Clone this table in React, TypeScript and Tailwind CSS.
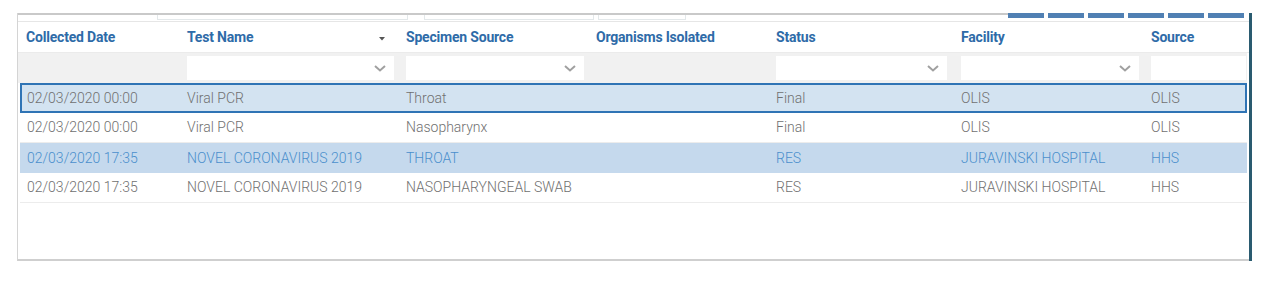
import React from "react";

const cols = "grid grid-cols-[161px_219px_190px_180px_185px_190px_104px]";
const rowCols = "grid grid-cols-[159px_219px_190px_180px_185px_190px_104px]";

const Chevron = () => (
  <svg width="12" height="7" viewBox="0 0 12 7" className="shrink-0">
    <polyline points="1,1 6,5.5 11,1" fill="none" stroke="#a0a0a0" strokeWidth="2" />
  </svg>
);

const FilterBox = () => (
  <div className="h-[24px] bg-white flex items-center justify-end pr-2">
    <Chevron />
  </div>
);

type Row = { d: string; t: string; s: string; st: string; f: string; src: string };

const rows: Row[] = [
  { d: "02/03/2020 00:00", t: "Viral PCR", s: "Throat", st: "Final", f: "OLIS", src: "OLIS" },
  { d: "02/03/2020 00:00", t: "Viral PCR", s: "Nasopharynx", st: "Final", f: "OLIS", src: "OLIS" },
  { d: "02/03/2020 17:35", t: "NOVEL CORONAVIRUS 2019", s: "THROAT", st: "RES", f: "JURAVINSKI HOSPITAL", src: "HHS" },
  { d: "02/03/2020 17:35", t: "NOVEL CORONAVIRUS 2019", s: "NASOPHARYNGEAL SWAB", st: "RES", f: "JURAVINSKI HOSPITAL", src: "HHS" },
];

export default function App() {
  return (
    <div className="w-[1267px] h-[282px] bg-white pt-[13px] pl-[17px]" style={{ fontFamily: "Roboto, 'Noto Sans', sans-serif" }}>
      <div className="w-[1235px] h-[248px] flex">
        <div className="flex-1 flex flex-col border-l border-[#d4d4d4] border-b-2 border-b-[#cfcfcf]">
          {/* top strip */}
          <div className="h-[9px] flex border-b border-[#e6e6e6]">
            <div className="flex-1 border-t-2 border-[#c9c9c9] flex pl-[139px]">
              <div className="w-[251px] h-[5px] border border-t-0 border-[#e3e8ea]" />
              <div className="w-[16px]" />
              <div className="w-[170px] h-[5px] border border-t-0 border-[#e3e8ea]" />
              <div className="w-[4px]" />
              <div className="w-[88px] h-[5px] border border-t-0 border-[#e3e8ea]" />
            </div>
            <div className="flex gap-[4px] pr-[6px]">
              {[0, 1, 2, 3, 4, 5].map((i) => (
                <div key={i} className="w-[36px] h-[5px] bg-[#5080b3]" />
              ))}
            </div>
          </div>
          {/* header */}
          <div className={`${cols} h-[31px] items-center border-b border-[#ebebeb] text-[14px] font-bold text-[#2e6ba8] tracking-[-0.2px]`}>
            <div className="pl-[8px]">Collected Date</div>
            <div className="pl-[8px] pr-[13px] flex items-center justify-between">
              <span>Test Name</span>
              <svg width="6" height="4" viewBox="0 0 6 4" className="mt-[4px]">
                <polygon points="0,0 6,0 3,3.5" fill="#555" />
              </svg>
            </div>
            <div className="pl-[8px]">Specimen Source</div>
            <div className="pl-[8px]">Organisms Isolated</div>
            <div className="pl-[8px]">Status</div>
            <div className="pl-[8px]">Facility</div>
            <div className="pl-[8px]">Source</div>
          </div>
          {/* filter row */}
          <div className={`${cols} h-[30px] items-center bg-[#f1f1f1] mr-[3px]`}>
            <div />
            <div className="pl-[8px] pr-[4px]"><FilterBox /></div>
            <div className="pl-[8px] pr-[4px]"><FilterBox /></div>
            <div />
            <div className="pl-[8px] pr-[6px]"><FilterBox /></div>
            <div className="pl-[8px] pr-[4px]"><FilterBox /></div>
            <div className="pl-[8px] pr-[1px]"><div className="h-[24px] bg-white" /></div>
          </div>
          {/* rows */}
          <div className="ml-[2px] mr-[3px] flex flex-col">
            {rows.map((r, i) => {
              const sel = i === 0;
              const alt = i === 2;
              const bg = sel
                ? "bg-[#d3e3f1] shadow-[inset_0_0_0_2px_#2f74b5]"
                : alt
                ? "bg-[#c5d9ed]"
                : "bg-white border-b border-[#ececec]";
              const color = alt ? "text-[#4a8fcc]" : "text-[#707070]";
              return (
                <div key={i} className={`${rowCols} h-[30px] items-center text-[14px] font-light ${bg} ${color}`}>
                  <div className="pl-[7px]">{r.d}</div>
                  <div className="pl-[8px]">{r.t}</div>
                  <div className="pl-[8px]">{r.s}</div>
                  <div className="pl-[8px]"></div>
                  <div className="pl-[8px]">{r.st}</div>
                  <div className="pl-[8px]">{r.f}</div>
                  <div className="pl-[8px]">{r.src}</div>
                </div>
              );
            })}
          </div>
          <div className="flex-1" />
        </div>
        <div className="w-[3px] ml-[-1px] bg-[#2a5b70]" />
      </div>
    </div>
  );
}
